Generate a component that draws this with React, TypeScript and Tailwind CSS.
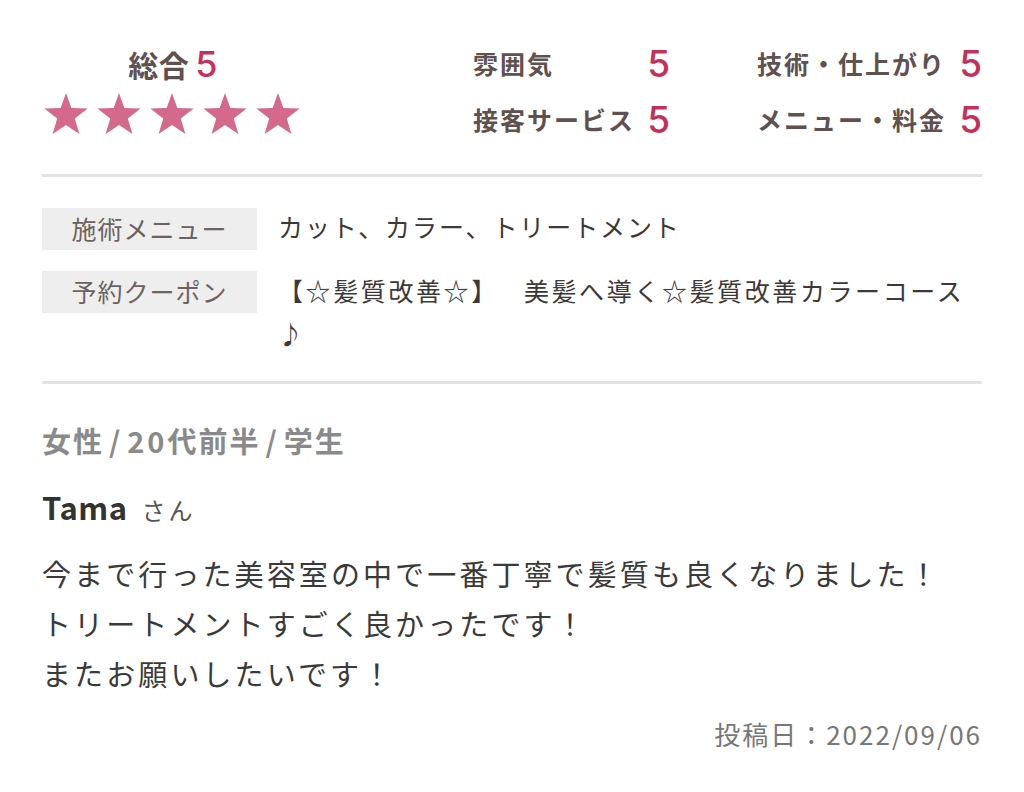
import React from 'react';

const font = { fontFamily: '"Noto Sans CJK JP", "Noto Sans", sans-serif' };
const numFont = { fontFamily: 'Inter, "Liberation Sans", sans-serif', fontWeight: 500 };

function Star() {
    return (
        <svg width="46" height="44" viewBox="0 0 24 23">
            <polygon
                points="12,0.5 14.8,8.4 23.3,8.6 16.6,13.8 19,22 12,17.2 5,22 7.4,13.8 0.7,8.6 9.2,8.4"
                fill="#d4698b"
            />
        </svg>
    );
}

const scores = [
    { label: '雰囲気', value: 5 },
    { label: '技術・仕上がり', value: 5 },
    { label: '接客サービス', value: 5 },
    { label: 'メニュー・料金', value: 5 },
];

export default function App() {
    return (
        <div className="bg-white w-[1024px] min-h-[792px] px-[42px] pt-[42px]" style={font}>
            {/* rating summary */}
            <div className="flex items-start h-[132px]">
                <div className="w-[262px] flex flex-col items-center">
                    <div className="flex items-baseline font-bold leading-[44px]">
                        <span className="text-[30px] text-[#5e5150] tracking-[0.5px]">総合</span>
                        <span className="text-[36px] text-[#c4325c] ml-[6px]" style={numFont}>5</span>
                    </div>
                    <div className="flex gap-[7px] mt-[6px] -ml-[3px]">
                        {[0, 1, 2, 3, 4].map((i) => (
                            <Star key={i} />
                        ))}
                    </div>
                </div>
                <div className="ml-[169px] grid grid-cols-[197px_225px] gap-x-[87px] gap-y-[12px]">
                    {scores.map((s) => (
                        <div key={s.label} className="flex items-center justify-between h-[44px]">
                            <span className="text-[25px] font-bold text-[#5e5150] tracking-[2px]">{s.label}</span>
                            <span className="text-[37px] text-[#c4325c]" style={numFont}>{s.value}</span>
                        </div>
                    ))}
                </div>
            </div>

            <div className="h-[3px] bg-[#e3e3e3]" />

            {/* menu / coupon */}
            <div className="pt-[31px] pb-[26px] flex flex-col gap-[21px]">
                <div className="flex items-start">
                    <div className="w-[215px] h-[42px] bg-[#eeeeee] flex items-center justify-center text-[25px] text-[#6b6261] tracking-[1px] shrink-0">
                        施術メニュー
                    </div>
                    <div className="ml-[21px] text-[25px] leading-[40px] text-[#3d3838] tracking-[1.9px] -mt-[2px]">
                        カット、カラー、トリートメント
                    </div>
                </div>
                <div className="flex items-start">
                    <div className="w-[215px] h-[42px] bg-[#eeeeee] flex items-center justify-center text-[25px] text-[#6b6261] tracking-[1px] shrink-0">
                        予約クーポン
                    </div>
                    <div className="ml-[21px] text-[25px] leading-[43px] text-[#3d3838] tracking-[2.6px] -mt-[2px]">
                        【☆髪質改善☆】　<span className="ml-[10px]">美髪へ導く☆髪質改善カラーコース</span>
                        <br />♪
                    </div>
                </div>
            </div>

            <div className="h-[3px] bg-[#e3e3e3]" />

            {/* review */}
            <div className="pt-[36px]">
                <div className="text-[29px] font-bold text-[#8a8a8a] leading-[40px] tracking-[2px] flex items-baseline">
                    <span>女性</span>
                    <span className="mx-[5px]">/</span>
                    <span className="tracking-[3px]">20</span>
                    <span>代前半</span>
                    <span className="mx-[5px]">/</span>
                    <span>学生</span>
                </div>
                <div className="mt-[27px] flex items-baseline leading-[40px]">
                    <span className="text-[31px] font-bold text-[#333333] tracking-[0.5px]">Tama</span>
                    <span className="text-[24px] text-[#555555] ml-[14px] tracking-[3px]">さん</span>
                </div>
                <p className="mt-[18px] text-[29px] leading-[50px] text-[#3a3a3a] tracking-[3.1px]">
                    今まで行った美容室の中で一番丁寧で髪質も良くなりました！
                    <br />
                    トリートメントすごく良かったです！
                    <br />
                    またお願いしたいです！
                </p>
                <div className="mt-[18px] text-right text-[26px] text-[#777777] leading-[36px] tracking-[2px]">投稿日：2022/09/06</div>
            </div>
        </div>
    );
}
